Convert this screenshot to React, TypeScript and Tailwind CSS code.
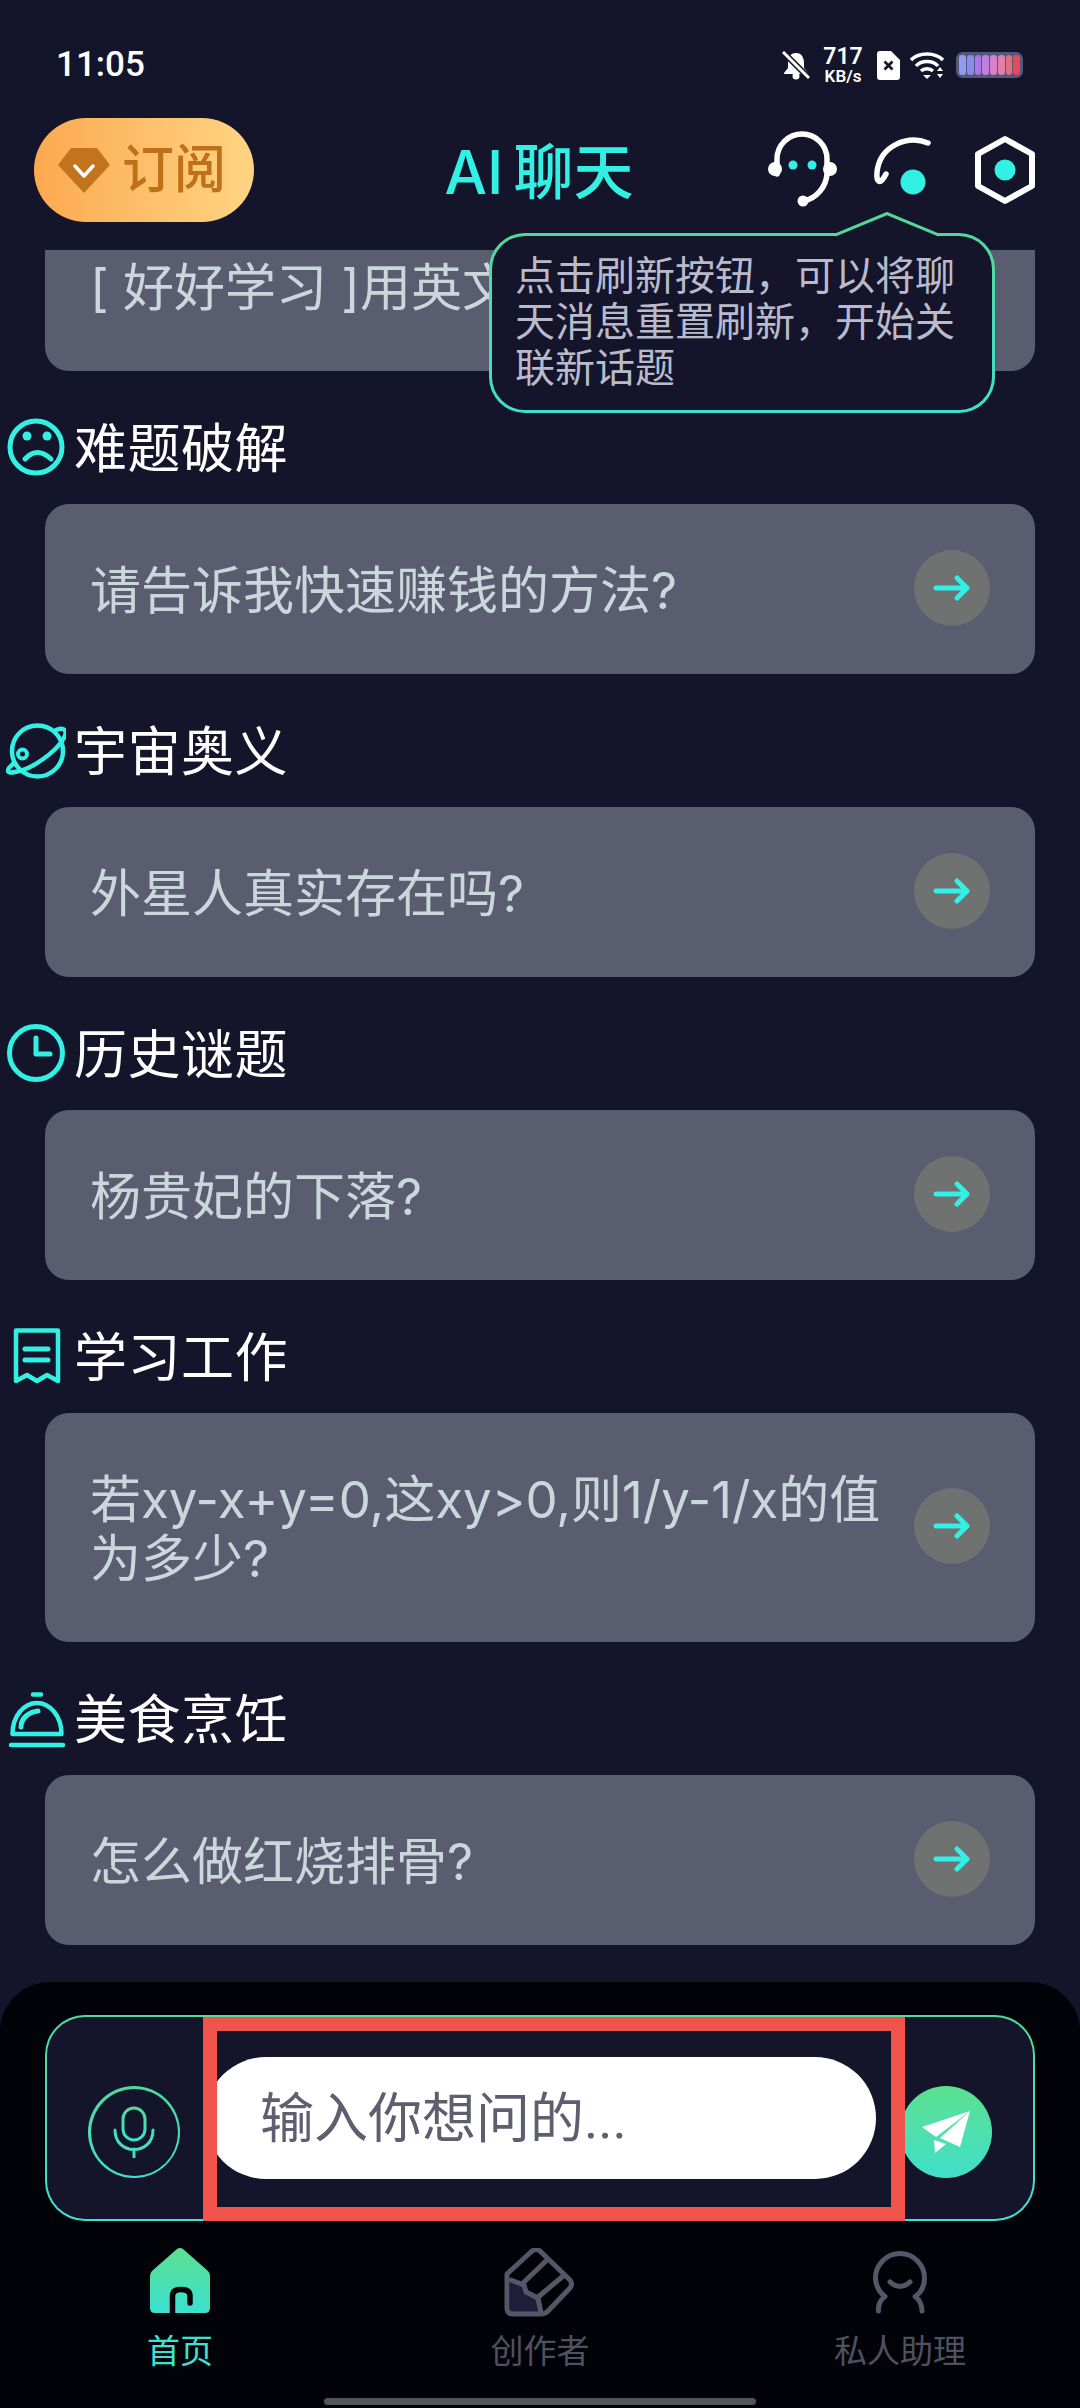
import type { ReactNode } from 'react';

const CYAN = '#33f0e4';

function SadIcon() {
  return (
    <svg width="60" height="60" viewBox="0 0 60 60" fill="none" stroke={CYAN} strokeWidth="5" strokeLinecap="round">
      <circle cx="30" cy="30" r="26" />
      <circle cx="21" cy="19" r="4.5" fill={CYAN} stroke="none" />
      <circle cx="41" cy="19" r="4.5" fill={CYAN} stroke="none" />
      <path d="M19 42 Q31 29 45 42" />
    </svg>
  );
}

function PlanetIcon() {
  return (
    <svg width="60" height="60" viewBox="0 0 60 60" fill="none" stroke={CYAN} strokeWidth="4.5" strokeLinecap="round">
      <circle cx="31.5" cy="31" r="25.5" />
      <path d="M7 44 C0 50 0 54 9 52 C25 50 50 32 58 18 C62 10 58 7 50 10" />
      <circle cx="16.5" cy="34" r="4.5" strokeWidth="4" />
    </svg>
  );
}

function ClockIcon() {
  return (
    <svg width="60" height="60" viewBox="0 0 60 60" fill="none" stroke={CYAN} strokeWidth="5" strokeLinecap="round" strokeLinejoin="round">
      <circle cx="30" cy="30" r="26.5" />
      <path d="M30 15 V31 H44" />
    </svg>
  );
}

function ReceiptIcon() {
  return (
    <svg width="60" height="60" viewBox="0 0 60 60" fill="none" stroke={CYAN} strokeWidth="4.5" strokeLinecap="round" strokeLinejoin="round">
      <path d="M10 4.5 H52 V55 L41 49 L31 55 L21 49 L10 55 Z" />
      <path d="M19 23 H42 M19 34 H42" strokeWidth="5" />
    </svg>
  );
}

function ClocheIcon() {
  return (
    <svg width="60" height="60" viewBox="0 0 60 60" fill="none" stroke={CYAN} strokeWidth="4.5" strokeLinecap="round" strokeLinejoin="round">
      <path d="M6.5 46 C6.5 28 18 15 31 15 C44 15 55.5 28 55.5 46 Z" />
      <path d="M5 57 H57 M27 6.5 H35" />
      <path d="M15 39 C15 30 23 24 32 23" strokeWidth="5" />
    </svg>
  );
}

function ArrowIcon() {
  return (
    <svg width="38" height="28" viewBox="0 0 38 28" fill="none" stroke={CYAN} strokeWidth="5" strokeLinecap="round" strokeLinejoin="round">
      <path d="M3 14 H34 M24 4 L34 14 L24 24" />
    </svg>
  );
}

function PromptCard({ text, className = '' }: { text: string; className?: string }) {
  return (
    <div className={`mx-[45px] bg-[#5a5d70] rounded-[24px] flex items-center pl-[45px] pr-[45px] pt-[57px] pb-[54px] ${className}`}>
      <p className="flex-1 text-[51px] leading-[59px] text-[#cdd7db] pr-[20px]">{text}</p>
      <span className="w-[76px] h-[76px] -mt-[13px] -mb-[7px] shrink-0 rounded-full bg-[#6f7270] flex items-center justify-center">
        <ArrowIcon />
      </span>
    </div>
  );
}

const SECTIONS: { title: string; prompt: string; icon: ReactNode }[] = [
  { title: '难题破解', prompt: '请告诉我快速赚钱的方法?', icon: <SadIcon /> },
  { title: '宇宙奥义', prompt: '外星人真实存在吗?', icon: <PlanetIcon /> },
  { title: '历史谜题', prompt: '杨贵妃的下落?', icon: <ClockIcon /> },
  { title: '学习工作', prompt: '若xy-x+y=0,这xy>0,则1/y-1/x的值为多少?', icon: <ReceiptIcon /> },
  { title: '美食烹饪', prompt: '怎么做红烧排骨?', icon: <ClocheIcon /> },
];

const BATTERY_BARS = [
  'bg-[#8f9cf0]',
  'bg-[#8a8af0]',
  'bg-[#a878e8]',
  'bg-[#c080e0]',
  'bg-[#d880c8]',
  'bg-[#e080a8]',
  'bg-[#e07080]',
  'bg-[#e84858]',
];

function StatusBar() {
  return (
    <div className="h-[118px] shrink-0 flex items-center justify-between pl-[56px] pr-[57px] pt-[12px] text-white">
      <span className="text-[35px] font-medium font-['Roboto',sans-serif]">11:05</span>
      <div className="flex items-center font-['Roboto',sans-serif]">
        <svg width="28" height="29" viewBox="0 0 28 29">
          <path d="M14 2 C8 2 6 7 6 12 V17 L2 22 V23 H26 V22 L22 17 V12 C22 7 20 2 14 2 Z" fill="#fff" />
          <circle cx="14" cy="25" r="3.5" fill="#fff" />
          <path d="M1 1 L27 27" stroke="#14152a" strokeWidth="6" />
          <path d="M1 1 L27 27" stroke="#fff" strokeWidth="3" />
        </svg>
        <div className="ml-[13px] w-[40px] flex flex-col items-center font-semibold">
          <span className="text-[23px] leading-[22px]">717</span>
          <span className="text-[17px] leading-[16px]">KB/s</span>
        </div>
        <svg className="ml-[14px]" width="23" height="29" viewBox="0 0 23 29">
          <path d="M3 0 H14 L23 9 V26 A3 3 0 0 1 20 29 H3 A3 3 0 0 1 0 26 V3 A3 3 0 0 1 3 0 Z" fill="#fff" />
          <path d="M7.5 10.5 L15.5 18.5 M15.5 10.5 L7.5 18.5" stroke="#14152a" strokeWidth="2.6" />
        </svg>
        <svg className="ml-[10px]" width="36" height="29" viewBox="0 0 36 29" fill="none" stroke="#fff" strokeWidth="3.4">
          <path d="M1 9 C9 1 25 1 33 9" />
          <path d="M6 15 C11 9 23 9 28 15" />
          <path d="M11 20 C14 17 20 17 23 20" />
          <path d="M13 24 L17 28 L21 24 Z" fill="#fff" stroke="none" />
          <path d="M27 20 L30 16 L33 20 Z M27 23 L30 27 L33 23 Z" fill="#fff" stroke="none" />
        </svg>
        <div className="ml-[10px] w-[67px] h-[26px] rounded-[7px] bg-[#55587a] flex items-center justify-center gap-[1px] px-[3px]">
          {BATTERY_BARS.map((bar) => (
            <span key={bar} className={`flex-1 h-[20px] rounded-[3px] ${bar}`} />
          ))}
        </div>
      </div>
    </div>
  );
}

function Header() {
  return (
    <div className="h-[132px] shrink-0 grid grid-cols-[1fr_auto_1fr] items-start px-[34px]">
      <div className="w-[220px] h-[104px] rounded-[52px] bg-linear-to-r from-[#fca94f] to-[#ffd483] flex items-center pl-[24px]">
        <svg width="52" height="46" viewBox="0 0 52 46">
          <path d="M13 1 H39 L52 18 L26 46 L0 18 Z" fill="#c2731b" />
          <path d="M17 19 L26 29 L35 19" fill="none" stroke="#fff" strokeWidth="3.5" strokeLinecap="round" strokeLinejoin="round" />
        </svg>
        <span className="ml-[12px] text-[52px] leading-none text-[#bf7119] font-medium">订阅</span>
      </div>
      <h1 className="h-[104px] mt-[2px] -ml-[2px] flex items-center text-[60px] font-medium text-[#33f0e4] [word-spacing:-6px]">AI 聊天</h1>
      <div className="flex justify-end items-start pt-[12px] pr-[9px]">
        <svg width="70" height="78" viewBox="0 0 70 78" fill="none" stroke="#fff" strokeWidth="5.5" strokeLinecap="round">
          <path d="M9 44 V29 A25 25 0 0 1 59 29 V44 A30 30 0 0 1 36 71" />
          <circle cx="7" cy="39" r="7" fill="#fff" stroke="none" />
          <circle cx="62" cy="39" r="7" fill="#fff" stroke="none" />
          <circle cx="35" cy="71" r="5.5" fill="#fff" stroke="none" />
          <circle cx="25" cy="35" r="4.5" fill={CYAN} stroke="none" />
          <circle cx="44" cy="35" r="4.5" fill={CYAN} stroke="none" />
        </svg>
        <svg className="ml-[30px]" width="64" height="70" viewBox="0 0 64 70" fill="none" stroke="#fff" strokeWidth="5.5" strokeLinecap="round">
          <path d="M60 13 C40 5 12 15 9 42 C8 52 12 56 18 44" />
          <circle cx="45" cy="52" r="12.5" fill={CYAN} stroke="none" />
        </svg>
        <svg className="ml-[41px] mt-[5px]" width="64" height="70" viewBox="0 0 64 70" fill="none" stroke="#fff" strokeWidth="6" strokeLinejoin="round">
          <path d="M32 4 L59 19 V51 L32 66 L5 51 V19 Z" />
          <circle cx="32" cy="35" r="10.5" fill={CYAN} stroke="none" />
        </svg>
      </div>
    </div>
  );
}

function Tooltip() {
  return (
    <div className="absolute left-[489px] top-[233px] w-[506px]">
      <div className="rounded-[36px] p-[3px] bg-linear-to-b from-[#54d89a] to-[#3fe0d0]">
        <div className="h-[174px] rounded-[33px] bg-[#14152a] pl-[23px] pr-[20px] pt-[17px] text-[40px] leading-[46px] text-[#b9bbcc]">
          {'点击刷新按钮\uFF0C可以将聊天消息重置刷新\uFF0C开始关联新话题'}
        </div>
      </div>
      <svg className="absolute left-[346px] top-[-21px]" width="104" height="25" viewBox="0 0 104 25">
        <path d="M2 25 V22 L52 1.5 L102 22 V25 Z" fill="#14152a" />
        <path d="M0 23 L52 1.5 L104 23" fill="none" stroke="#54d89a" strokeWidth="3" />
      </svg>
    </div>
  );
}

function NavItem({ label, active, children }: { label: string; active?: boolean; children: ReactNode }) {
  return (
    <div className="flex flex-col items-center">
      <div className="h-[68px] flex items-start justify-center">{children}</div>
      <span className={`mt-[15px] text-[33px] leading-[40px] ${active ? 'text-[#3be3d4]' : 'text-[#4f5160]'}`}>{label}</span>
    </div>
  );
}

function BottomPanel() {
  return (
    <div className="h-[426px] shrink-0 bg-[#020308] rounded-t-[50px] pt-[33px] flex flex-col">
      <div className="mx-[45px] h-[206px] shrink-0 rounded-[40px] p-[2px] bg-linear-to-b from-[#54d89a] to-[#3fe0d0]">
        <div className="h-full rounded-[38px] bg-[#14152a] flex items-center">
          <div className="ml-[41px] mt-[28px] w-[92px] h-[92px] shrink-0 rounded-full p-[2.5px] bg-linear-to-b from-[#54d89a] to-[#3fe0d0]">
            <div className="w-full h-full rounded-full bg-[#14152a] flex items-center justify-center">
              <svg width="42" height="52" viewBox="0 0 42 52" fill="none">
                <defs>
                  <linearGradient id="micStroke" x1="0" y1="0" x2="0" y2="1">
                    <stop offset="0" stopColor="#54d89a" />
                    <stop offset="1" stopColor="#3fe0d0" />
                  </linearGradient>
                </defs>
                <rect x="10" y="2" width="22" height="32" rx="11" stroke="url(#micStroke)" strokeWidth="3" />
                <path d="M2 24 C2 50 40 50 40 24 M21 43 V51" stroke="#42dfc6" strokeWidth="3" strokeLinecap="round" />
              </svg>
            </div>
          </div>
          <div className="ml-[25px] w-[671px] h-[122px] shrink-0 rounded-[61px] bg-white flex items-center pl-[55px] pt-[3px] text-[54px] text-[#5d5f70] font-['Roboto','Noto_Sans_CJK_SC',sans-serif]">
            输入你想问的...
          </div>
          <div className="ml-[24px] mt-[28px] w-[92px] h-[92px] shrink-0 rounded-full bg-linear-to-b from-[#5be08f] to-[#40dfc9] flex items-center justify-center">
            <svg width="48" height="42" viewBox="0 0 48 42" fill="#fff">
              <path d="M48 0 L0 16 L14 26 Z" />
              <path d="M48 0 L18 27 L38 36 Z" />
              <path d="M12 29 L13 42 L24 33 Z" />
            </svg>
          </div>
        </div>
      </div>
      <div className="grid grid-cols-3 pt-[27px]">
        <NavItem label="首页" active>
          <svg width="60" height="66" viewBox="0 0 60 66">
            <defs>
              <linearGradient id="homeFill" x1="0" y1="0" x2="0" y2="1">
                <stop offset="0" stopColor="#5be08f" />
                <stop offset="1" stopColor="#3be0d0" />
              </linearGradient>
            </defs>
            <path d="M27 1 Q30 -1 33 1 L58 23 Q60 25 60 28 V60 Q60 65 55 65 H5 Q0 65 0 60 V28 Q0 25 2 23 Z" fill="url(#homeFill)" />
            <path d="M22.5 65 V48 Q22.5 41.5 31 41.5 Q40 41.5 40 48 V55" fill="none" stroke="#020308" strokeWidth="5.5" strokeLinecap="round" />
          </svg>
        </NavItem>
        <NavItem label="创作者">
          <svg width="72" height="70" viewBox="0 0 72 70" fill="none" stroke="#555768" strokeWidth="5" strokeLinejoin="round" strokeLinecap="round">
            <path d="M6 34 L20 39 L22 46 L34 52 L36 64 H6 Z" fill="#1f1d3a" stroke="none" />
            <path d="M3 26 L28 3 Q32 0 36 3 L66 32 Q69 36 66 40 L44 63 Q41 66 37 66 H9 Q3 66 3 60 Z" />
            <path d="M7 32 L20 37 L22 44 L34 50 L37 65" />
            <path d="M18 36 L43 12 M33 50 L58 29" />
          </svg>
        </NavItem>
        <NavItem label="私人助理">
          <svg width="60" height="68" viewBox="0 0 60 68" fill="none" stroke="#555768" strokeWidth="5" strokeLinecap="round" strokeLinejoin="round">
            <path d="M8.5 63 C8 56 10 52 15 48.5 C8 43 5.5 37 5.5 30 A24.5 24.5 0 0 1 54.5 30 C54.5 38 52 44 45 48.5 C50 52 52 56 52 63" />
            <path d="M20 34 Q30 43 40 34" />
          </svg>
        </NavItem>
      </div>
      <div className="mx-auto mt-[27px] w-[432px] h-[7px] rounded-full bg-[#555558]" />
    </div>
  );
}

export default function App() {
  return (
    <div className="relative w-[1080px] h-[2408px] overflow-hidden bg-[#14152a] flex flex-col font-['Inter','Noto_Sans_CJK_SC',sans-serif]">
      <StatusBar />
      <Header />
      <div className="flex-1 overflow-hidden">
        <PromptCard className="-mt-[49px]" text="[ 好好学习 ]用英文怎么说?" />
        {SECTIONS.map((section) => (
          <div key={section.title}>
            <div className="h-[133px] pt-[19px] pl-[6px] flex items-center">
              {section.icon}
              <h2 className="ml-[8px] pt-[5px] text-[53px] tracking-[0.5px] text-white">{section.title}</h2>
            </div>
            <PromptCard text={section.prompt} />
          </div>
        ))}
      </div>
      <BottomPanel />
      <Tooltip />
      {/* red annotation box over the input */}
      <div className="absolute left-[203px] top-[2017px] w-[702px] h-[204px] border-[14px] border-[#f0524c]" />
    </div>
  );
}
